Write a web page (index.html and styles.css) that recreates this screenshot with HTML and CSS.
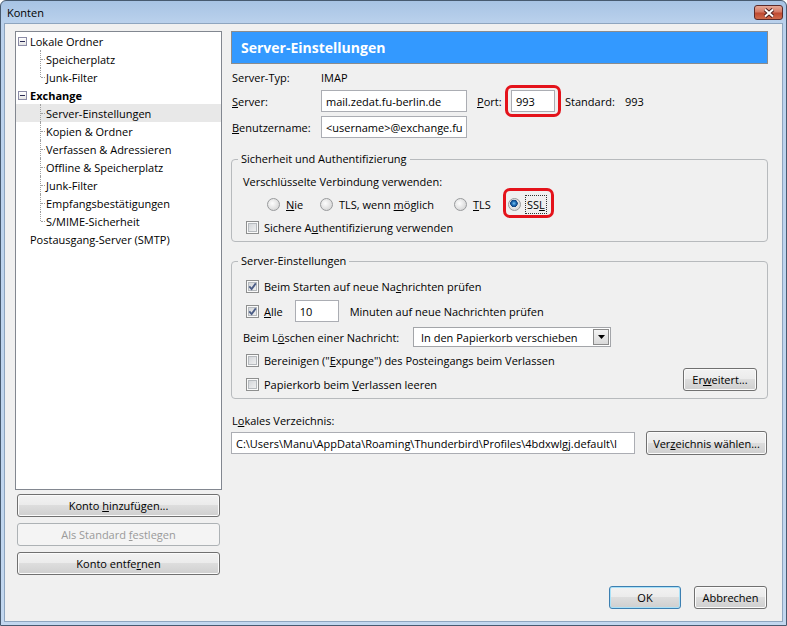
FILE: index.html
```html
<!DOCTYPE html>
<html lang="de">
<head>
    <meta charset="UTF-8">
    <meta name="viewport" content="width=device-width, initial-scale=1.0">
    <title>Konten</title>
    <link rel="stylesheet" href="styles.css">
</head>
<body>

<div class="window">
    <div class="titlebar">
        <span class="title">Konten</span>
        <span class="close-btn">
            <svg width="12" height="10" viewBox="0 0 12 10">
                <path d="M2 1.5 L10 8.5 M10 1.5 L2 8.5" stroke="#4a1c1c" stroke-width="3.8"/>
                <path d="M2 1.5 L10 8.5 M10 1.5 L2 8.5" stroke="#fff" stroke-width="2"/>
            </svg>
        </span>
    </div>

    <div class="client">
        <div class="main">
            <div class="sidebar">
                <ul class="tree">
                    <li class="node"><span class="expander"></span>Lokale Ordner</li>
                    <li class="leaf">Speicherplatz</li>
                    <li class="leaf last">Junk-Filter</li>
                    <li class="node bold"><span class="expander"></span>Exchange</li>
                    <li class="leaf selected">Server-Einstellungen</li>
                    <li class="leaf">Kopien &amp; Ordner</li>
                    <li class="leaf">Verfassen &amp; Adressieren</li>
                    <li class="leaf">Offline &amp; Speicherplatz</li>
                    <li class="leaf">Junk-Filter</li>
                    <li class="leaf">Empfangsbestätigungen</li>
                    <li class="leaf last">S/MIME-Sicherheit</li>
                    <li class="node plain">Postausgang-Server (SMTP)</li>
                </ul>
                <button class="btn side-btn">Konto <u>h</u>inzufügen...</button>
                <button class="btn side-btn" disabled>Als Standard <u>f</u>estlegen</button>
                <button class="btn side-btn">Konto entfe<u>r</u>nen</button>
            </div>

            <div class="content">
                <div class="page-header">Server-Einstellungen</div>

                <div class="field-row row-type">
                    <span class="lbl">Server-Typ:</span>
                    <span>IMAP</span>
                </div>
                <div class="field-row row-server">
                    <span class="lbl"><u>S</u>erver:</span>
                    <span class="textbox tb-host">mail.zedat.fu-berlin.de</span>
                    <span class="port-lbl"><u>P</u>ort:</span>
                    <span class="textbox tb-port marked">993</span>
                    <span class="std-lbl">Standard:</span>
                    <span>993</span>
                </div>
                <div class="field-row row-user">
                    <span class="lbl"><u>B</u>enutzername:</span>
                    <span class="textbox tb-host">&lt;username&gt;@exchange.fu</span>
                </div>

                <div class="group group-security">
                    <div class="group-title">Sicherheit und Authentifizierung</div>
                    <div class="group-line">Verschlüsselte Verbindung verwenden:</div>
                    <div class="radio-row">
                        <label class="radio opt-never"><span class="rb"></span><span><u>N</u>ie</span></label>
                        <label class="radio opt-tls-maybe"><span class="rb"></span><span>TLS, wenn <u>m</u>öglich</span></label>
                        <label class="radio opt-tls"><span class="rb"></span><span><u>T</u>LS</span></label>
                        <label class="radio marked"><span class="rb on"></span><span class="focus">SS<u>L</u></span></label>
                    </div>
                    <label class="check row-auth"><span class="cb"></span><span>Sichere A<u>u</u>thentifizierung verwenden</span></label>
                </div>

                <div class="group group-server">
                    <div class="group-title">Server-Einstellungen</div>
                    <label class="check row-start">
                        <span class="cb on"><svg width="9" height="9" viewBox="0 0 9 9"><path d="M1.3 4.4 L3.6 7 L7.8 1.4" fill="none" stroke="#4b5d86" stroke-width="1.8"/></svg></span>
                        <span>Beim Starten auf neue Na<u>c</u>hrichten prüfen</span>
                    </label>
                    <div class="interval-row">
                        <label class="check">
                            <span class="cb on"><svg width="9" height="9" viewBox="0 0 9 9"><path d="M1.3 4.4 L3.6 7 L7.8 1.4" fill="none" stroke="#4b5d86" stroke-width="1.8"/></svg></span>
                            <span><u>A</u>lle</span>
                        </label>
                        <span class="textbox tb-min">10</span>
                        <span class="min-lbl">Minuten auf neue Nachrichten prüfen</span>
                    </div>
                    <div class="delete-row">
                        <span class="delete-lbl">Beim L<u>ö</u>schen einer Nachricht:</span>
                        <div class="combo">
                            <span>In den Papierkorb verschieben</span>
                            <span class="combo-btn"><svg width="7" height="4" viewBox="0 0 7 4"><path d="M0 0 H7 L3.5 4 Z" fill="#000"/></svg></span>
                        </div>
                    </div>
                    <label class="check row-expunge"><span class="cb"></span><span>Bereinigen ("<u>E</u>xpunge") des Posteingangs beim Verlassen</span></label>
                    <div class="last-row">
                        <label class="check"><span class="cb"></span><span>Papierkorb beim <u>V</u>erlassen leeren</span></label>
                        <button class="btn btn-adv">Er<u>w</u>eitert...</button>
                    </div>
                </div>

                <div class="dir-lbl">L<u>o</u>kales Verzeichnis:</div>
                <div class="dir-row">
                    <span class="textbox tb-dir">C:\Users\Manu\AppData\Roaming\Thunderbird\Profiles\4bdxwlgj.default\I</span>
                    <button class="btn btn-dir">Ver<u>z</u>eichnis wählen...</button>
                </div>
            </div>
        </div>

        <div class="footer">
            <button class="btn btn-ok">OK</button>
            <button class="btn btn-cancel">Abbrechen</button>
        </div>
    </div>
</div>

</body>
</html>
```

FILE: styles.css
```css
* {
    margin: 0;
    padding: 0;
    box-sizing: border-box;
}

body {
    font-family: "Open Sans", "Noto Sans", sans-serif;
    font-size: 11px;
    color: #000;
    background: #fff;
}

/* window frame */

.window {
    width: 787px;
    height: 626px;
    display: flex;
    flex-direction: column;
    border: 1px solid #475a70;
    border-radius: 6px 6px 0 0;
    background: linear-gradient(#a7c3e4, #bad1ec 22px, #c2d7ef);
}

.titlebar {
    height: 22px;
    display: flex;
    justify-content: space-between;
    align-items: flex-start;
    padding: 0 3px 0 6px;
}

.title {
    line-height: 24px;
}

.close-btn {
    width: 29px;
    height: 15px;
    margin-top: 4px;
    display: flex;
    align-items: center;
    justify-content: center;
    border: 1px solid #5b2a2a;
    border-radius: 3px;
    background: linear-gradient(#e6a896, #d47a66 45%, #bf4a32 55%, #cf6a4c);
}

.client {
    flex: 1;
    margin: 0 3px 3px;
    border: 1px solid #8ea5bf;
    background: #f0f0f0;
    padding: 7px 14px 12px 10px;
    display: flex;
    flex-direction: column;
}

.main {
    height: 544px;
    display: flex;
    gap: 9px;
}

/* buttons */

.btn {
    font: inherit;
    color: #000;
    height: 23px;
    border: 1px solid #707070;
    border-radius: 3px;
    background: linear-gradient(#f2f2f2, #ebebeb 50%, #dddddd 50%, #cfcfcf);
    box-shadow: inset 0 0 0 1px #fbfbfb;
}

.btn:disabled {
    color: #9a9a9a;
    border-color: #adb2b5;
    background: #f4f4f4;
    box-shadow: none;
}

/* left side */

.sidebar {
    width: 207px;
    flex-shrink: 0;
    display: flex;
    flex-direction: column;
}

.tree {
    flex: 1;
    list-style: none;
    background: #fff;
    border: 1px solid #828790;
}

.tree li {
    height: 18px;
    display: flex;
    align-items: center;
    position: relative;
    white-space: nowrap;
}

.tree .node {
    padding-left: 2px;
}

.tree .bold {
    font-weight: bold;
}

.tree .plain {
    padding-left: 14px;
}

.tree .leaf {
    padding-left: 30px;
}

.tree .leaf::before {
    content: "";
    position: absolute;
    left: 24px;
    top: 0;
    bottom: 0;
    border-left: 1px dotted #a0a0a0;
}

.tree .leaf.last::before {
    bottom: 9px;
}

.tree .leaf::after {
    content: "";
    position: absolute;
    left: 25px;
    top: 9px;
    width: 4px;
    border-top: 1px dotted #a0a0a0;
}

.tree .selected {
    background: #e8e8e8;
}

.expander {
    width: 9px;
    height: 9px;
    margin-right: 3px;
    border: 1px solid #8b8ba6;
    background: linear-gradient(#2b2b55, #2b2b55) no-repeat center / 5px 1px,
                linear-gradient(#ffffff, #e4e4e4);
}

.side-btn {
    margin: 6px 2px 0;
}

.side-btn:first-of-type {
    margin-top: 4px;
}

/* right side */

.content {
    flex: 1;
    min-width: 0;
    display: flex;
    flex-direction: column;
}

.page-header {
    height: 33px;
    display: flex;
    align-items: center;
    padding-left: 9px;
    margin-bottom: 3px;
    background: #3399ff;
    border: 1px solid #8a8c8e;
    color: #fff;
    font-size: 14px;
    font-weight: bold;
}

.field-row {
    display: flex;
    align-items: center;
    padding-left: 1px;
}

.field-row .lbl {
    width: 89px;
}

.row-type {
    height: 20px;
    margin-bottom: 3px;
}

.row-server {
    height: 22px;
    margin-bottom: 4px;
}

.row-user {
    height: 22px;
}

.textbox {
    height: 22px;
    display: flex;
    align-items: center;
    padding: 0 4px;
    background: #fff;
    border: 1px solid #abadb3;
    white-space: nowrap;
    overflow: hidden;
}

.tb-host {
    width: 146px;
}

.port-lbl {
    width: 34px;
    margin-left: 10px;
}

.tb-port {
    width: 44px;
    overflow: visible;
}

.std-lbl {
    width: 60px;
    margin-left: 10px;
}

/* red marks */

.marked {
    position: relative;
}

.marked::after {
    content: "";
    position: absolute;
    top: -6px;
    left: -7px;
    right: -7px;
    bottom: -6px;
    border: 3px solid #e4131b;
    border-radius: 7px;
}

.radio.marked::after {
    top: -7px;
    left: -5px;
    right: -9px;
    bottom: -5px;
}

/* group boxes */

.group {
    border: 1px solid #b7babd;
    border-radius: 4px;
    padding: 0 10px 5px 11px;
}

.group-title {
    width: fit-content;
    margin: -9px 0 0 -5px;
    padding: 0 3px;
    line-height: 16px;
    background: #f0f0f0;
}

.group-security {
    margin-top: 21px;
}

.group-server {
    margin-top: 19px;
}

.group-line {
    height: 18px;
    line-height: 18px;
    margin-top: 6px;
}

.radio-row {
    height: 18px;
    margin-top: 4px;
    padding-left: 24px;
    display: flex;
}

.opt-never {
    width: 53px;
}

.opt-tls-maybe {
    width: 134px;
}

.opt-tls {
    width: 54px;
}

.radio,
.check {
    height: 18px;
    display: flex;
    align-items: center;
    white-space: nowrap;
}

.rb {
    width: 13px;
    height: 13px;
    margin-right: 6px;
    border: 1px solid #989a9c;
    border-radius: 50%;
    background: radial-gradient(circle at 40% 40%, #fdfdfd, #d6d6d6 80%);
}

.rb.on {
    background: radial-gradient(circle at 45% 40%, #7cc4f0 0, #1f6fb8 2px, #0f3f7a 3.5px, transparent 4px),
                radial-gradient(circle at 40% 40%, #fdfdfd, #d6d6d6 80%);
}

.focus {
    outline: 1px dotted #333;
    outline-offset: 1px;
}

.check {
    margin-left: 3px;
}

.cb {
    width: 13px;
    height: 13px;
    margin-right: 5px;
    display: flex;
    align-items: center;
    justify-content: center;
    border: 1px solid #8e8f8f;
    background: linear-gradient(135deg, #cdd0d4, #f6f6f6);
    box-shadow: inset 0 0 0 1px #fafafa, inset 0 0 0 2px #b6babe;
}

.row-auth {
    margin-top: 5px;
}

.row-start {
    margin-top: 8px;
}

.interval-row {
    height: 22px;
    margin-top: 5px;
    display: flex;
    align-items: center;
}

.tb-min {
    width: 44px;
    margin-left: 12px;
}

.min-lbl {
    margin-left: 11px;
}

.delete-row {
    height: 20px;
    margin-top: 5px;
    display: flex;
    align-items: center;
}

.delete-lbl {
    width: 170px;
}

.combo {
    width: 198px;
    height: 20px;
    display: flex;
    align-items: center;
    justify-content: space-between;
    padding: 0 1px 0 7px;
    background: #fff;
    border: 1px solid #a3a5a9;
}

.combo-btn {
    width: 16px;
    height: 16px;
    display: flex;
    align-items: center;
    justify-content: center;
    border: 1px solid #8a8a8a;
    background: linear-gradient(#f3f3f3, #d9d9d9);
}

.row-expunge {
    margin-top: 4px;
}

.last-row {
    height: 25px;
    margin-top: -1px;
    display: flex;
    justify-content: space-between;
    align-items: flex-start;
}

.last-row .check {
    margin-top: 7px;
}

.btn-adv {
    width: 74px;
}

.dir-lbl {
    height: 18px;
    line-height: 18px;
    margin-top: 13px;
    padding-left: 1px;
}

.dir-row {
    height: 24px;
    margin: 1px 1px 0 0;
    display: flex;
    align-items: center;
}

.tb-dir {
    flex: 1;
    min-width: 0;
}

.btn-dir {
    width: 121px;
    height: 24px;
    flex-shrink: 0;
    margin-left: 11px;
}

/* footer */

.footer {
    margin-top: 11px;
    padding-right: 1px;
    display: flex;
    justify-content: flex-end;
    gap: 13px;
}

.btn-ok {
    width: 72px;
    border-color: #3c7fb1;
    box-shadow: inset 0 0 0 1px #a9e1f8;
}

.btn-cancel {
    width: 73px;
}
```
